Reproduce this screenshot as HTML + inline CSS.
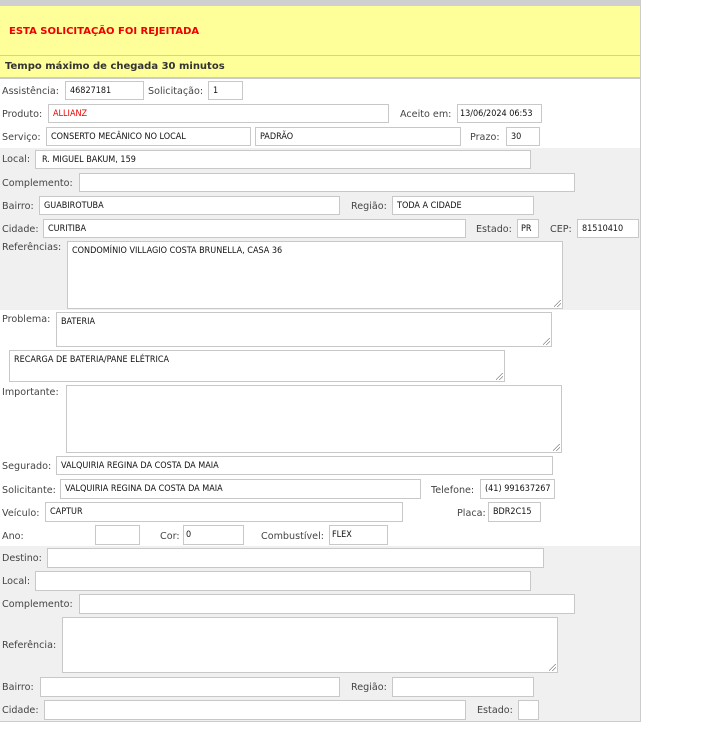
<!DOCTYPE html>
<html><head><meta charset="utf-8"><style>
body{margin:0;width:706px;height:740px;background:#fff;position:relative;overflow:hidden;font-family:"DejaVu Sans","Liberation Sans",sans-serif;}
.a{position:absolute}
.l{position:absolute;font-size:9.6px;color:#444;white-space:nowrap;line-height:12px}
.b{position:absolute;background:#fff;border:1px solid #c8c8c8;box-sizing:border-box;font-size:9px;color:#111;padding:0 0 0 4px;white-space:nowrap;overflow:hidden;display:flex;align-items:center;font-family:"DejaVu Sans Condensed","DejaVu Sans",sans-serif}
.t{align-items:flex-start;padding-top:4px}
.g{position:absolute;left:0;width:640px;background:#f0f0f0}
.r::after{content:"";position:absolute;right:1px;bottom:1px;width:7px;height:7px;background:linear-gradient(135deg,transparent 45%,#888 46%,#888 52%,transparent 53%,transparent 70%,#888 71%,#888 77%,transparent 78%)}
</style></head><body>
<div class="a" style="left:0;top:0;width:640px;height:6px;background:#cfcfcf"></div>
<div class="a" style="left:0;top:6px;width:640px;height:49px;background:#ffff99"></div>
<div class="a" style="left:9px;top:25px;font-size:10px;font-weight:bold;color:#e00;font-family:'DejaVu Sans',sans-serif;line-height:12px;top:26px">ESTA SOLICITAÇÃO FOI REJEITADA</div>
<div class="a" style="left:0;top:55px;width:640px;height:1px;background:#ccc"></div>
<div class="a" style="left:0;top:56px;width:640px;height:21px;background:#ffff99"></div>
<div class="a" style="left:5px;top:61px;font-size:10px;font-weight:bold;color:#333;line-height:12px">Tempo máximo de chegada 30 minutos</div>
<div class="a" style="left:0;top:77px;width:640px;height:2px;background:#ccc"></div>
<div class="a" style="left:640px;top:0;width:1px;height:722px;background:#ccc"></div>
<div class="a" style="left:0;top:721px;width:641px;height:1px;background:#ccc"></div>
<div class="g" style="top:148px;height:162px"></div>
<div class="g" style="top:546px;height:175px"></div>

<div class="l" style="left:2px;top:86px">Assistência:</div><div class="b" style="left:65px;top:81px;width:79px;height:19px">46827181</div>
<div class="l" style="left:148px;top:86px">Solicitação:</div><div class="b" style="left:208px;top:81px;width:35px;height:19px">1</div>
<div class="l" style="left:2px;top:109px">Produto:</div><div class="b" style="left:48px;top:104px;width:341px;height:19px;color:#e00">ALLIANZ</div>
<div class="l" style="left:400px;top:109px">Aceito em:</div><div class="b" style="left:457px;top:104px;width:85px;height:19px;padding-left:2px">13/06/2024 06:53</div>
<div class="l" style="left:2px;top:132px">Serviço:</div><div class="b" style="left:46px;top:127px;width:205px;height:19px">CONSERTO MECÂNICO NO LOCAL</div>
<div class="b" style="left:255px;top:127px;width:206px;height:19px">PADRÃO</div>
<div class="l" style="left:470px;top:132px">Prazo:</div><div class="b" style="left:506px;top:127px;width:34px;height:19px">30</div>

<div class="l" style="left:2px;top:154px">Local:</div><div class="b" style="left:35px;top:150px;width:496px;height:19px;padding-left:6px">R. MIGUEL BAKUM, 159</div>
<div class="l" style="left:2px;top:178px">Complemento:</div><div class="b" style="left:79px;top:173px;width:496px;height:19px"></div>
<div class="l" style="left:2px;top:201px">Bairro:</div><div class="b" style="left:39px;top:196px;width:301px;height:19px">GUABIROTUBA</div>
<div class="l" style="left:351px;top:201px">Região:</div><div class="b" style="left:392px;top:196px;width:142px;height:19px">TODA A CIDADE</div>
<div class="l" style="left:2px;top:224px">Cidade:</div><div class="b" style="left:43px;top:219px;width:423px;height:19px">CURITIBA</div>
<div class="l" style="left:476px;top:224px">Estado:</div><div class="b" style="left:517px;top:219px;width:22px;height:19px;padding-left:3px">PR</div>
<div class="l" style="left:550px;top:224px">CEP:</div><div class="b" style="left:577px;top:219px;width:62px;height:19px">81510410</div>
<div class="l" style="left:2px;top:242px">Referências:</div><div class="b t r" style="left:67px;top:241px;width:496px;height:68px">CONDOMÍNIO VILLAGIO COSTA BRUNELLA, CASA 36</div>

<div class="l" style="left:2px;top:314px">Problema:</div><div class="b t r" style="left:56px;top:312px;width:496px;height:35px">BATERIA</div>
<div class="b t r" style="left:9px;top:350px;width:496px;height:32px">RECARGA DE BATERIA/PANE ELÉTRICA</div>
<div class="l" style="left:2px;top:387px">Importante:</div><div class="b r" style="left:66px;top:385px;width:496px;height:68px"></div>
<div class="l" style="left:2px;top:461px">Segurado:</div><div class="b" style="left:56px;top:456px;width:497px;height:19px">VALQUIRIA REGINA DA COSTA DA MAIA</div>
<div class="l" style="left:2px;top:485px">Solicitante:</div><div class="b" style="left:60px;top:479px;width:361px;height:20px">VALQUIRIA REGINA DA COSTA DA MAIA</div>
<div class="l" style="left:431px;top:485px">Telefone:</div><div class="b" style="left:480px;top:479px;width:75px;height:20px">(41) 991637267</div>
<div class="l" style="left:2px;top:508px">Veículo:</div><div class="b" style="left:45px;top:502px;width:358px;height:20px">CAPTUR</div>
<div class="l" style="left:457px;top:508px">Placa:</div><div class="b" style="left:488px;top:502px;width:53px;height:20px">BDR2C15</div>
<div class="l" style="left:2px;top:531px">Ano:</div><div class="b" style="left:95px;top:525px;width:45px;height:20px"></div>
<div class="l" style="left:160px;top:531px">Cor:</div><div class="b" style="left:183px;top:525px;width:61px;height:20px;padding-left:2px">0</div>
<div class="l" style="left:261px;top:531px">Combustível:</div><div class="b" style="left:329px;top:525px;width:59px;height:20px;padding-left:2px">FLEX</div>

<div class="l" style="left:2px;top:553px">Destino:</div><div class="b" style="left:47px;top:548px;width:497px;height:20px"></div>
<div class="l" style="left:2px;top:576px">Local:</div><div class="b" style="left:35px;top:571px;width:496px;height:20px"></div>
<div class="l" style="left:2px;top:599px">Complemento:</div><div class="b" style="left:79px;top:594px;width:496px;height:20px"></div>
<div class="l" style="left:2px;top:640px">Referência:</div><div class="b r" style="left:62px;top:617px;width:496px;height:56px"></div>
<div class="l" style="left:2px;top:682px">Bairro:</div><div class="b" style="left:40px;top:677px;width:300px;height:20px"></div>
<div class="l" style="left:351px;top:682px">Região:</div><div class="b" style="left:392px;top:677px;width:142px;height:20px"></div>
<div class="l" style="left:2px;top:705px">Cidade:</div><div class="b" style="left:44px;top:700px;width:422px;height:20px"></div>
<div class="l" style="left:477px;top:705px">Estado:</div><div class="b" style="left:518px;top:700px;width:21px;height:20px"></div>
</body></html>
